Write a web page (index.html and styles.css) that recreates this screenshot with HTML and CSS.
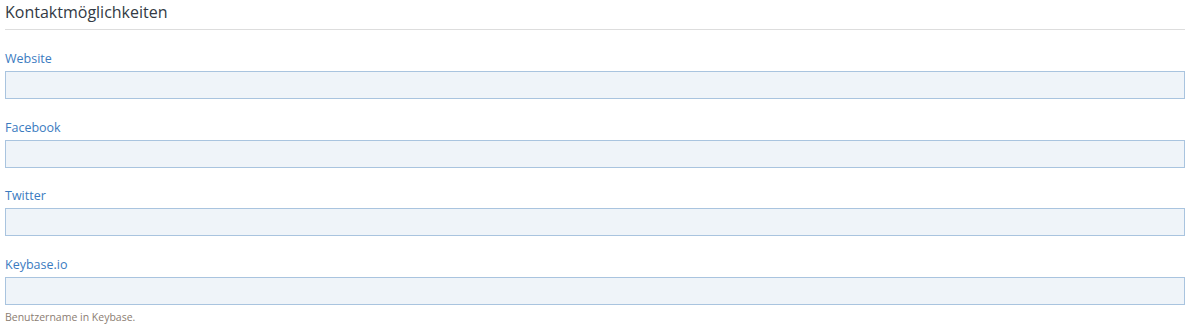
FILE: index.html
```html
<!DOCTYPE html>
<html lang="de">
<head>
<meta charset="utf-8">
<title>Kontaktmöglichkeiten</title>
<link rel="stylesheet" href="styles.css">
</head>
<body>
<section class="panel">
  <h2 class="panel-title">Kontaktmöglichkeiten</h2>
  <div class="field">
    <label class="field-label" for="website">Website</label>
    <input class="field-input" id="website" type="text">
  </div>
  <div class="field">
    <label class="field-label" for="facebook">Facebook</label>
    <input class="field-input" id="facebook" type="text">
  </div>
  <div class="field">
    <label class="field-label" for="twitter">Twitter</label>
    <input class="field-input" id="twitter" type="text">
  </div>
  <div class="field">
    <label class="field-label" for="keybase">Keybase.io</label>
    <input class="field-input" id="keybase" type="text">
    <div class="field-help">Benutzername in Keybase.</div>
  </div>
</section>
</body>
</html>
```
FILE: styles.css
```css
html, body {
  margin: 0;
  padding: 0;
  background: #ffffff;
  font-family: "Open Sans", "Noto Sans", sans-serif;
}
.panel {
  padding: 0 4px 0 5px;
  display: flex;
  flex-direction: column;
}
.panel-title {
  margin: 0;
  font-size: 16px;
  font-weight: 400;
  color: #333a44;
  line-height: 24px;
  padding-bottom: 5px;
  border-bottom: 1px solid #dddddd;
  margin-bottom: 21px;
}
.field {
  display: flex;
  flex-direction: column;
  margin-bottom: 20.67px;
}
.field:last-child {
  margin-bottom: 0;
}
.field-label {
  font-size: 12.5px;
  line-height: 16px;
  color: #3b7bbf;
  margin-bottom: 4px;
}
.field-input {
  box-sizing: border-box;
  height: 28px;
  margin: 0;
  border: 1px solid #a9c4df;
  background: #eff4f9;
  border-radius: 0;
  font-family: inherit;
  font-size: 12px;
  padding: 0 6px;
}
.field-help {
  font-size: 10.5px;
  line-height: 14px;
  color: #8b7d72;
  margin-top: 5px;
}
```
